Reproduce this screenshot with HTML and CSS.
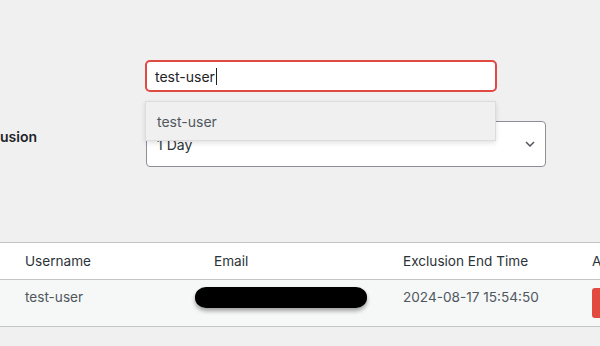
FILE: index.html
```html
<!DOCTYPE html>
<html lang="en">
  <head>
    <meta charset="UTF-8" />
    <meta name="viewport" content="width=device-width, initial-scale=1.0" />
    <title>User Exclusions</title>
    <link rel="stylesheet" href="styles.css">
  </head>
  <body>
    <!-- Exclusion Form -->
    <div class="form-table">
      <div class="form-label"></div>
      <div class="form-field search-field">
        <div class="search-input">
          <span class="typed">test-user</span><span class="caret"></span>
        </div>
        <ul class="suggestions">
          <li>test-user</li>
        </ul>
      </div>

      <div class="form-label exclusion-label">Exclusion</div>
      <div class="form-field">
        <div class="select">
          <span>1 Day</span>
          <svg class="chevron" width="10" height="6" viewBox="0 0 10 6">
            <polyline points="1,1 5,5 9,1" fill="none" stroke="#50575e" stroke-width="1.5" />
          </svg>
        </div>
      </div>
    </div>

    <!-- Excluded Users List -->
    <div class="list">
      <div class="list-row list-head">
        <div class="cell">Username</div>
        <div class="cell">Email</div>
        <div class="cell">Exclusion End Time</div>
        <div class="cell">Action</div>
      </div>
      <div class="list-row list-body">
        <div class="cell">test-user</div>
        <div class="cell"><span class="redacted"></span></div>
        <div class="cell">2024-08-17 15:54:50</div>
        <div class="cell action-cell"><button class="btn-remove">Remove</button></div>
      </div>
    </div>
  </body>
</html>
```

FILE: styles.css
```css
body {
  font-family: Inter, "Noto Sans", sans-serif;
  font-size: 14px;
  background-color: #f0f0f1;
  color: #1d2327;
  margin: 0;
  width: 600px;
  height: 346px;
  overflow: hidden;
}
.form-table {
  display: grid;
  grid-template-columns: 174px 400px;
  row-gap: 29px;
  margin-left: -28px;
  padding-top: 60px;
}
.form-label {
  font-weight: 600;
}
.exclusion-label {
  padding-top: 7px;
}
.search-field {
  position: relative;
}
.search-input {
  box-sizing: border-box;
  width: 352px;
  height: 32px;
  margin-left: -1px;
  padding: 0 8px;
  display: flex;
  align-items: center;
  background-color: #ffffff;
  border: 2px solid #e04b41;
  border-radius: 5px;
  font-size: 14px;
  color: #1d2327;
}
.caret {
  display: inline-block;
  width: 1px;
  height: 17px;
  background-color: #1d2327;
  margin-left: 1px;
}
.suggestions {
  position: absolute;
  top: 41px;
  left: -1px;
  z-index: 5;
  box-sizing: border-box;
  width: 351px;
  height: 40px;
  margin: 0;
  padding: 0 11px;
  list-style: none;
  display: flex;
  align-items: center;
  background-color: #f0f0f0;
  border: 1px solid #dcdcde;
  box-shadow: 0 2px 5px rgba(0, 0, 0, 0.12);
  font-size: 14px;
  color: #50575e;
}
.select {
  box-sizing: border-box;
  width: 400px;
  height: 46px;
  padding: 0 10px;
  display: flex;
  align-items: center;
  justify-content: space-between;
  background-color: #ffffff;
  border: 1px solid #8c8f94;
  border-radius: 4px;
  font-size: 14px;
  color: #2c3338;
}
.list {
  margin-top: 75px;
  border-top: 1px solid #c3c4c7;
  border-bottom: 1px solid #c3c4c7;
  font-size: 13.6px;
}
.list-row {
  display: grid;
  grid-template-columns: 189px 189px 189px 189px;
  padding-left: 15px;
}
.list-head {
  height: 36px;
  align-items: center;
  background-color: #ffffff;
  border-bottom: 1px solid #c3c4c7;
  color: #2c3338;
}
.list-body {
  box-sizing: border-box;
  height: 46px;
  padding-top: 9px;
  align-items: start;
  background-color: #f6f7f7;
  color: #50575e;
}
.cell {
  padding-left: 10px;
  white-space: nowrap;
}
.redacted {
  display: block;
  margin-left: -19px;
  margin-top: -2px;
  width: 172px;
  height: 21px;
  background-color: #000000;
  border-radius: 11px / 10px;
  filter: blur(0.7px);
  box-shadow: 0 3px 4px rgba(0, 0, 0, 0.35);
}
.action-cell {
  margin-top: -1px;
}
.btn-remove {
  height: 30px;
  padding: 0 16px;
  border: none;
  border-radius: 3px;
  background-color: #e24a3f;
  color: #ffffff;
  font-family: inherit;
  font-size: 13px;
}
```
